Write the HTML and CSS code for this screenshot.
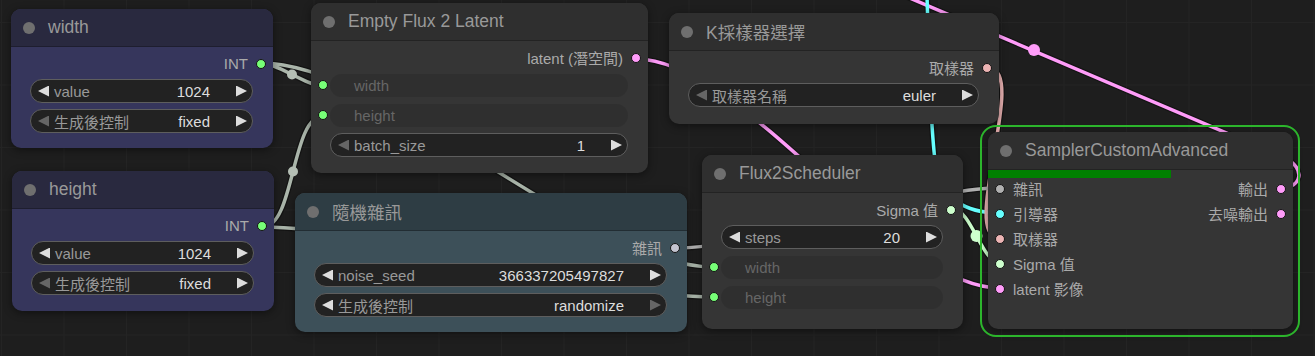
FILE: index.html
```html
<!DOCTYPE html>
<html lang="zh-Hant">
  <head>
    <meta charset="UTF-8" />
    <title>Flux 2 Workflow</title>
    <link rel="stylesheet" href="styles.css">
  </head>
  <body>
    <div class="canvas">
      <!-- Links layer (drawn under the nodes) -->
      <svg class="links" width="1315" height="356" viewBox="0 0 1315 356">
        <defs>
          <path id="l1" d="M261,63 C277.5,63 306.5,86 323,86" />
          <path id="l2" d="M263,227 C294.5,227 291.5,116 323,116" />
          <path id="l3" d="M261,63 C385,63 589,267 713,267" />
          <path id="l4" d="M263,227 C377,227 599,297 713,297" />
          <path id="l5" d="M636,59 C743.5,59 892.5,288 1000,288" />
          <path id="l6" d="M988,68 C1030.6,68 957.4,238 1000,238" />
          <path id="l7" d="M677,248 C759,248 918,188 1000,188" />
          <path id="l8" d="M953,209 C970.9,209 982.1,263 1000,263" />
          <path id="l9" d="M927,-4 C929,60 930,120 935,160 C942,200 965,213 1000,213" />
          <path id="l10" d="M1281,188 C1302,188 1306,168 1285,158 L905,-4" />
        </defs>
        <g class="under">
          <use href="#l1" /><use href="#l2" /><use href="#l3" /><use href="#l4" />
          <use href="#l5" /><use href="#l6" /><use href="#l7" /><use href="#l8" />
          <use href="#l9" /><use href="#l10" />
        </g>
        <use href="#l3" class="link l-int" />
        <use href="#l4" class="link l-int" />
        <use href="#l1" class="link l-int" />
        <use href="#l2" class="link l-int" />
        <use href="#l5" class="link l-latent" />
        <use href="#l10" class="link l-latent" />
        <use href="#l9" class="link l-guider" />
        <use href="#l6" class="link l-sampler" />
        <use href="#l7" class="link l-noise" />
        <use href="#l8" class="link l-sigma" />
        <!-- link center markers -->
        <circle cx="292" cy="74.5" r="5" class="mark m-int" />
        <circle cx="293" cy="171.5" r="5" class="mark m-int" />
        <circle cx="976.5" cy="236" r="6" class="mark m-sigma" />
        <circle cx="1034" cy="50" r="6" class="mark m-latent" />
      </svg>

      <!-- width -->
      <div class="node blue n-width">
        <div class="title"><span class="tdot"></span>width</div>
        <div class="body">
          <div class="out">INT<i class="dot int"></i></div>
          <div class="widget">
            <b class="arr l"></b><span class="lbl">value</span><span class="val">1024</span><b class="arr r"></b>
          </div>
          <div class="widget">
            <b class="arr l dim"></b><span class="lbl">生成後控制</span><span class="val">fixed</span><b class="arr r"></b>
          </div>
        </div>
      </div>

      <!-- height -->
      <div class="node blue n-height">
        <div class="title"><span class="tdot"></span>height</div>
        <div class="body">
          <div class="out">INT<i class="dot int"></i></div>
          <div class="widget">
            <b class="arr l"></b><span class="lbl">value</span><span class="val">1024</span><b class="arr r"></b>
          </div>
          <div class="widget">
            <b class="arr l dim"></b><span class="lbl">生成後控制</span><span class="val">fixed</span><b class="arr r"></b>
          </div>
        </div>
      </div>

      <!-- Empty Flux 2 Latent -->
      <div class="node n-latent">
        <div class="title"><span class="tdot"></span>Empty Flux 2 Latent</div>
        <div class="body">
          <div class="out">latent (潛空間)<i class="dot latent"></i></div>
          <div class="crow"><i class="dot int"></i><div class="pill">width</div></div>
          <div class="crow"><i class="dot int"></i><div class="pill">height</div></div>
          <div class="widget">
            <b class="arr l dim"></b><span class="lbl">batch_size</span><span class="val">1</span><b class="arr r"></b>
          </div>
        </div>
      </div>

      <!-- K sampler select -->
      <div class="node n-ksel">
        <div class="title"><span class="tdot"></span>K採樣器選擇</div>
        <div class="body">
          <div class="out">取樣器<i class="dot sampler"></i></div>
          <div class="widget">
            <b class="arr l dim"></b><span class="lbl">取樣器名稱</span><span class="val">euler</span><b class="arr r"></b>
          </div>
        </div>
      </div>

      <!-- Random noise -->
      <div class="node slate n-noise">
        <div class="title"><span class="tdot"></span>隨機雜訊</div>
        <div class="body">
          <div class="out">雜訊<i class="dot noise"></i></div>
          <div class="widget">
            <b class="arr l"></b><span class="lbl">noise_seed</span><span class="val">366337205497827</span><b class="arr r"></b>
          </div>
          <div class="widget">
            <b class="arr l"></b><span class="lbl">生成後控制</span><span class="val">randomize</span><b class="arr r dim"></b>
          </div>
        </div>
      </div>

      <!-- Flux2Scheduler -->
      <div class="node n-sched">
        <div class="title"><span class="tdot"></span>Flux2Scheduler</div>
        <div class="body">
          <div class="out">Sigma 值<i class="dot sigma"></i></div>
          <div class="widget">
            <b class="arr l"></b><span class="lbl">steps</span><span class="val">20</span><b class="arr r"></b>
          </div>
          <div class="crow"><i class="dot int"></i><div class="pill">width</div></div>
          <div class="crow"><i class="dot int"></i><div class="pill">height</div></div>
        </div>
      </div>

      <!-- SamplerCustomAdvanced (running) -->
      <div class="node selected n-sca">
        <div class="title"><span class="tdot"></span>SamplerCustomAdvanced</div>
        <div class="body split">
          <div class="col">
            <div class="in"><i class="dot noise-in"></i>雜訊</div>
            <div class="in"><i class="dot guider"></i>引導器</div>
            <div class="in"><i class="dot sampler"></i>取樣器</div>
            <div class="in"><i class="dot sigma"></i>Sigma 值</div>
            <div class="in"><i class="dot latent"></i>latent 影像</div>
          </div>
          <div class="col">
            <div class="out">輸出<i class="dot latent"></i></div>
            <div class="out">去噪輸出<i class="dot latent"></i></div>
          </div>
        </div>
        <div class="progress"></div>
      </div>
    </div>
  </body>
</html>
```

FILE: styles.css
```css
/* Global */
* {
  box-sizing: border-box;
}

body {
  margin: 0;
  width: 1315px;
  height: 356px;
  overflow: hidden;
  background-color: #1e1e1e;
  font-family: "Liberation Sans", "Noto Sans CJK TC", sans-serif;
}

/* Canvas with faint grid */
.canvas {
  position: relative;
  width: 1315px;
  height: 356px;
  overflow: hidden;
  background-color: #1e1e1e;
  background-image: linear-gradient(90deg, #242424 1px, transparent 1px),
    linear-gradient(#242424 1px, transparent 1px);
  background-size: 62.5px 62.5px;
  background-position: 1px 22px;
}

/* Links */
.links {
  position: absolute;
  left: 0;
  top: 0;
}

.under {
  fill: none;
  stroke: #000;
  stroke-width: 6;
  opacity: 0.35;
}

.link {
  fill: none;
  stroke-width: 3.5;
  stroke-linecap: round;
}

.l-int { stroke: #aab5aa; }
.l-latent { stroke: #ff9cf9; }
.l-guider { stroke: #66ffff; }
.l-sampler { stroke: #ecb4b4; }
.l-noise { stroke: #b0b0b0; }
.l-sigma { stroke: #cdffcd; }

.mark { stroke: none; }
.m-int { fill: #b4beb4; }
.m-sigma { fill: #cdffcd; }
.m-latent { fill: #ff9cf9; }

/* Nodes */
.node {
  position: absolute;
  display: flex;
  flex-direction: column;
  border-radius: 10px;
  background-color: #353535;
  box-shadow: 0 2px 8px rgba(0, 0, 0, 0.45);
}

.title {
  flex: none;
  height: 38px;
  display: flex;
  align-items: center;
  gap: 13px;
  padding-left: 12px;
  font-size: 17.5px;
  color: #999;
  background-color: #2f2f2f;
  border-radius: 10px 10px 0 0;
  border-bottom: 1px solid rgba(0, 0, 0, 0.25);
  white-space: nowrap;
}

.tdot {
  width: 12px;
  height: 12px;
  border-radius: 50%;
  background-color: #6f6f6f;
}

.body {
  display: flex;
  flex-direction: column;
  padding-top: 4px;
}

.body.split {
  flex-direction: row;
  justify-content: space-between;
  padding-top: 6px;
}

.col {
  display: flex;
  flex-direction: column;
}

/* Slots */
.out,
.in {
  height: 25px;
  display: flex;
  align-items: center;
  gap: 8px;
  font-size: 15px;
  color: #aaa;
  white-space: nowrap;
}

.out {
  justify-content: flex-end;
  padding-right: 7px;
}

.in {
  padding-left: 7px;
}

.dot {
  flex: none;
  width: 10px;
  height: 10px;
  border-radius: 50%;
  border: 1px solid #141414;
}

.int { background-color: #77ff77; }
.latent { background-color: #ff9cf9; }
.sampler { background-color: #ecb4b4; }
.noise { background-color: #c4c4d0; }
.noise-in { background-color: #b0b0b0; }
.sigma { background-color: #cdffcd; }
.guider { background-color: #66ffff; }

/* Widgets */
.widget {
  flex: none;
  height: 24px;
  margin: 3px 20px 3px 19px;
  padding: 0 5px 0 7px;
  display: flex;
  align-items: center;
  border: 1px solid #5e5e5e;
  border-radius: 12px;
  background-color: #222;
  font-size: 15px;
}

.arr {
  flex: none;
  width: 11px;
  height: 11px;
  background-color: #ddd;
}

.arr.l {
  clip-path: polygon(0 50%, 100% 0, 100% 100%);
}

.arr.r {
  clip-path: polygon(0 0, 100% 50%, 0 100%);
}

.arr.dim {
  background-color: #666;
}

.lbl {
  flex: 1;
  margin-left: 5px;
  color: #999;
  white-space: nowrap;
}

.val {
  margin-right: 26px;
  color: #ddd;
}

/* Converted widget inputs */
.crow {
  flex: none;
  height: 24px;
  margin: 3px 20px 3px 7px;
  display: flex;
  align-items: center;
  gap: 2px;
}

.pill {
  flex: 1;
  height: 23px;
  display: flex;
  align-items: center;
  padding-left: 24px;
  border-radius: 12px;
  background-color: rgba(0, 0, 0, 0.1);
  font-size: 15px;
  color: #666;
}

/* Colour variants */
.blue {
  background-color: #36365c;
}

.blue .title {
  background-color: #29293f;
}

.slate {
  background-color: #3d5059;
}

.slate .title {
  background-color: #2e3d44;
}

/* Running node */
.selected::before {
  content: "";
  position: absolute;
  top: -7px;
  right: -7px;
  bottom: -8px;
  left: -8px;
  border: 2px solid #2cb52c;
  border-radius: 16px;
  pointer-events: none;
}

.progress {
  position: absolute;
  left: 0;
  top: 38px;
  width: 183px;
  height: 8px;
  background-color: #008000;
}

/* Node placement on the canvas */
.n-width { left: 11px; top: 9px; width: 262px; height: 139px; }
.n-height { left: 12px; top: 171px; width: 262px; height: 140px; }
.n-latent { left: 311px; top: 3px; width: 337px; height: 170px; }
.n-ksel { left: 669px; top: 13px; width: 330px; height: 111px; }
.n-noise { left: 295px; top: 193px; width: 392px; height: 139px; }
.n-sched { left: 702px; top: 155px; width: 261px; height: 174px; }
.n-sca { left: 988px; top: 132px; width: 305px; height: 197px; }
```
